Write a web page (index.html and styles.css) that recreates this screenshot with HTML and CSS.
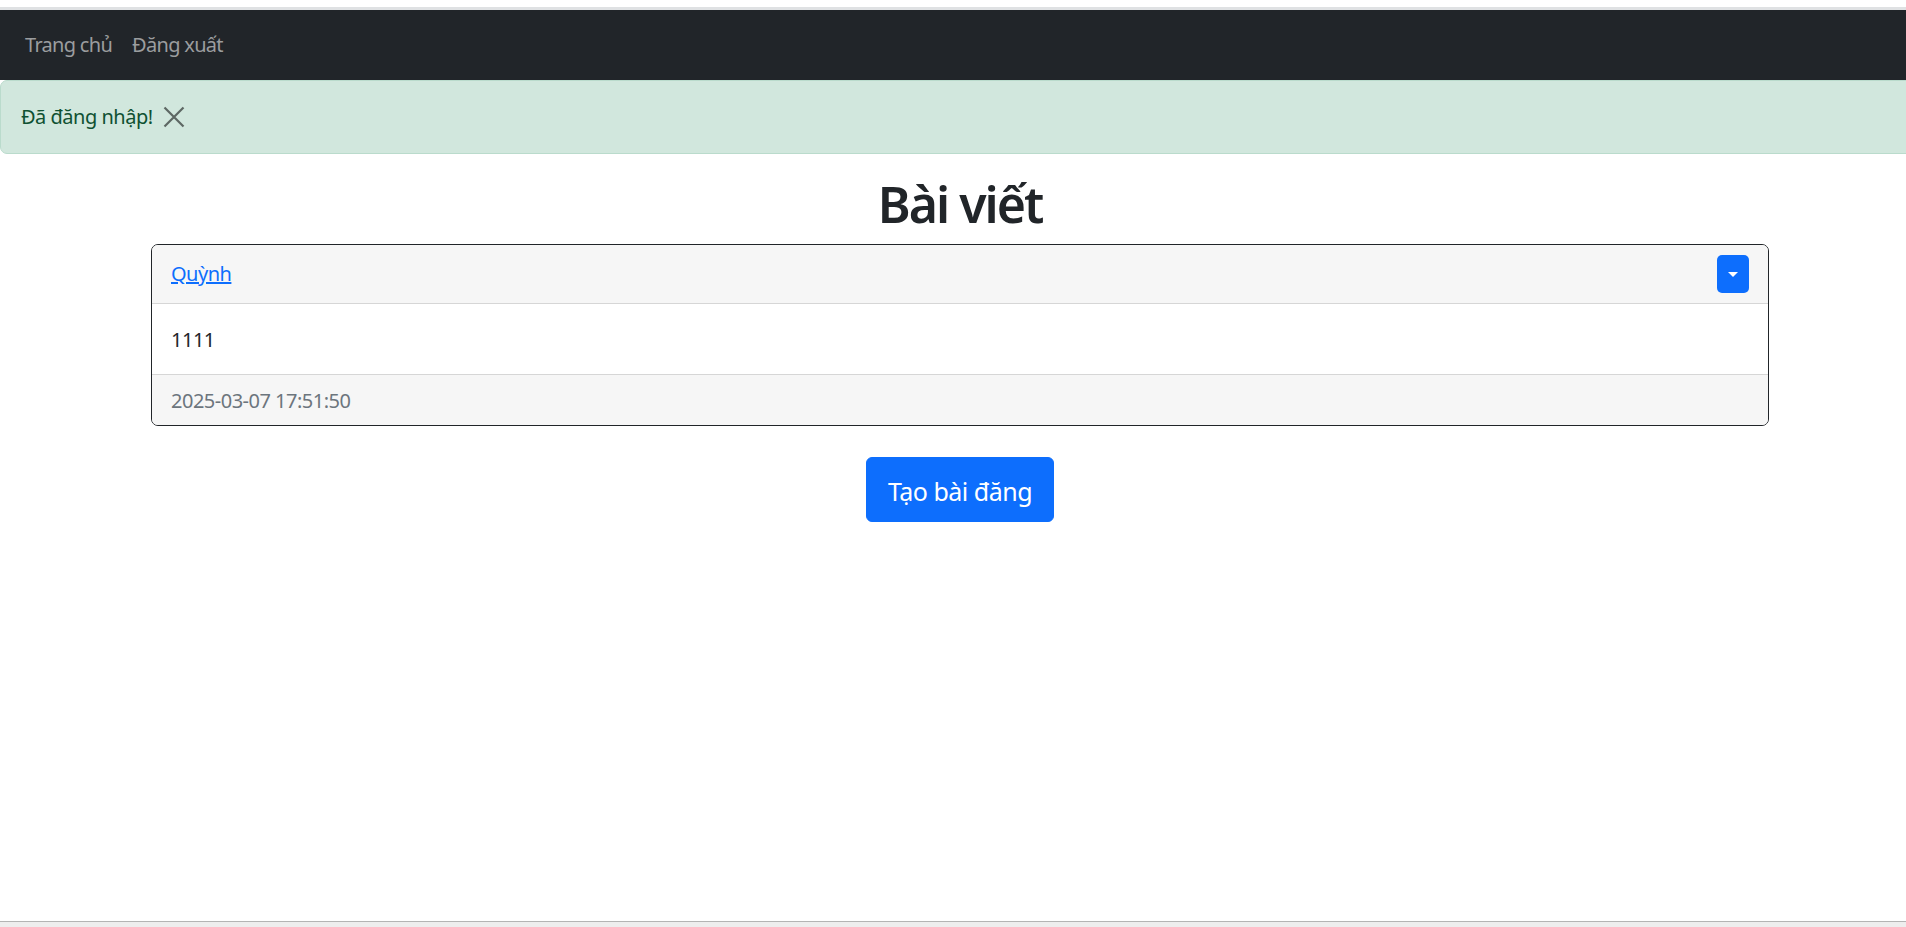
FILE: index.html
```html
<!DOCTYPE html>
<html lang="vi">
<head>
<meta charset="utf-8">
<title>Bài viết</title>
<link rel="stylesheet" href="styles.css">
</head>
<body>
<div class="page">
  <div class="topstrip"></div>
  <nav class="navbar">
    <a class="nav-link" href="#">Trang chủ</a>
    <a class="nav-link" href="#">Đăng xuất</a>
  </nav>
  <div class="alert">
    <span>Đã đăng nhập!</span>
    <button class="btn-close" type="button" aria-label="Close">
      <svg width="22" height="22" viewBox="0 0 22 22"><path d="M1.5 1.5 L20.5 20.5 M20.5 1.5 L1.5 20.5" stroke="currentColor" stroke-width="2.2" fill="none"/></svg>
    </button>
  </div>
  <main class="container">
    <h1 class="title">Bài viết</h1>
    <div class="card">
      <div class="card-header">
        <a class="author" href="#">Quỳnh</a>
        <button class="dd-btn" type="button" aria-label="Menu"><span class="caret"></span></button>
      </div>
      <div class="card-body">1111</div>
      <div class="card-footer">2025-03-07 17:51:50</div>
    </div>
    <div class="actions">
      <button class="btn-primary" type="button">Tạo bài đăng</button>
    </div>
  </main>
</div>
<div class="hscroll"></div>
</body>
</html>
```
FILE: styles.css
```css
html, body {
  margin: 0;
  padding: 0;
  overflow: hidden;
  background: #fff;
}
body {
  font-family: "Noto Sans", "Open Sans", sans-serif;
  font-size: 20px;
  line-height: 30px;
  letter-spacing: -0.5px;
  color: #212529;
}
.page {
  width: 1920px;
}
.topstrip {
  height: 7px;
  background: #fff;
  border-bottom: 3px solid #dfe1e3;
}
.navbar {
  background: #212529;
  height: 70px;
  display: flex;
  align-items: center;
  padding: 0 15px;
  box-sizing: border-box;
}
.nav-link {
  color: #9b9d9f;
  text-decoration: none;
  padding: 0 10px;
  letter-spacing: -0.7px;
}
.alert {
  display: flex;
  align-items: center;
  gap: 10px;
  background: #d1e7dd;
  border: 1px solid #badbcc;
  border-radius: 7px;
  color: #0f5132;
  height: 74px;
  box-sizing: border-box;
  padding: 0 20px;
}
.btn-close {
  border: 0;
  background: transparent;
  padding: 0;
  width: 22px;
  height: 22px;
  display: flex;
  align-items: center;
  justify-content: center;
  color: #000;
  opacity: 0.55;
}
.container {
  width: 1618px;
  margin: 0 auto;
}
.title {
  text-align: center;
  font-size: 50px;
  line-height: 60px;
  font-weight: 600;
  letter-spacing: -2px;
  margin: 20px 0 10px;
  color: #212529;
}
.card {
  border: 1px solid #212529;
  border-radius: 7px;
  overflow: hidden;
}
.card-header {
  display: flex;
  align-items: center;
  justify-content: space-between;
  background: #f6f6f6;
  padding: 10px 19px;
  border-bottom: 1px solid #d6d6d6;
}
.author {
  color: #0d6efd;
  text-decoration: underline;
}
.dd-btn {
  width: 32px;
  height: 38px;
  background: #0d6efd;
  border: 0;
  border-radius: 5px;
  padding: 0;
  display: flex;
  align-items: center;
  justify-content: center;
}
.caret {
  width: 0;
  height: 0;
  border-left: 5px solid transparent;
  border-right: 5px solid transparent;
  border-top: 5px solid #fff;
}
.card-body {
  padding: 21px 19px 19px;
  background: #fff;
}
.card-footer {
  padding: 11px 19px 9px;
  background: #f6f6f6;
  border-top: 1px solid #d6d6d6;
  color: #6c757d;
}
.actions {
  display: flex;
  justify-content: center;
  margin-top: 31px;
}
.btn-primary {
  font-family: inherit;
  font-size: 25px;
  line-height: 37px;
  letter-spacing: -0.5px;
  color: #fff;
  background: #0d6efd;
  border: 1px solid #0d6efd;
  border-radius: 6px;
  padding: 15px 21px 11px;
}
.hscroll {
  position: fixed;
  left: 0;
  right: 0;
  bottom: 0;
  height: 5px;
  background: #eeeeee;
  border-top: 1px solid #b4b4b4;
}
```
